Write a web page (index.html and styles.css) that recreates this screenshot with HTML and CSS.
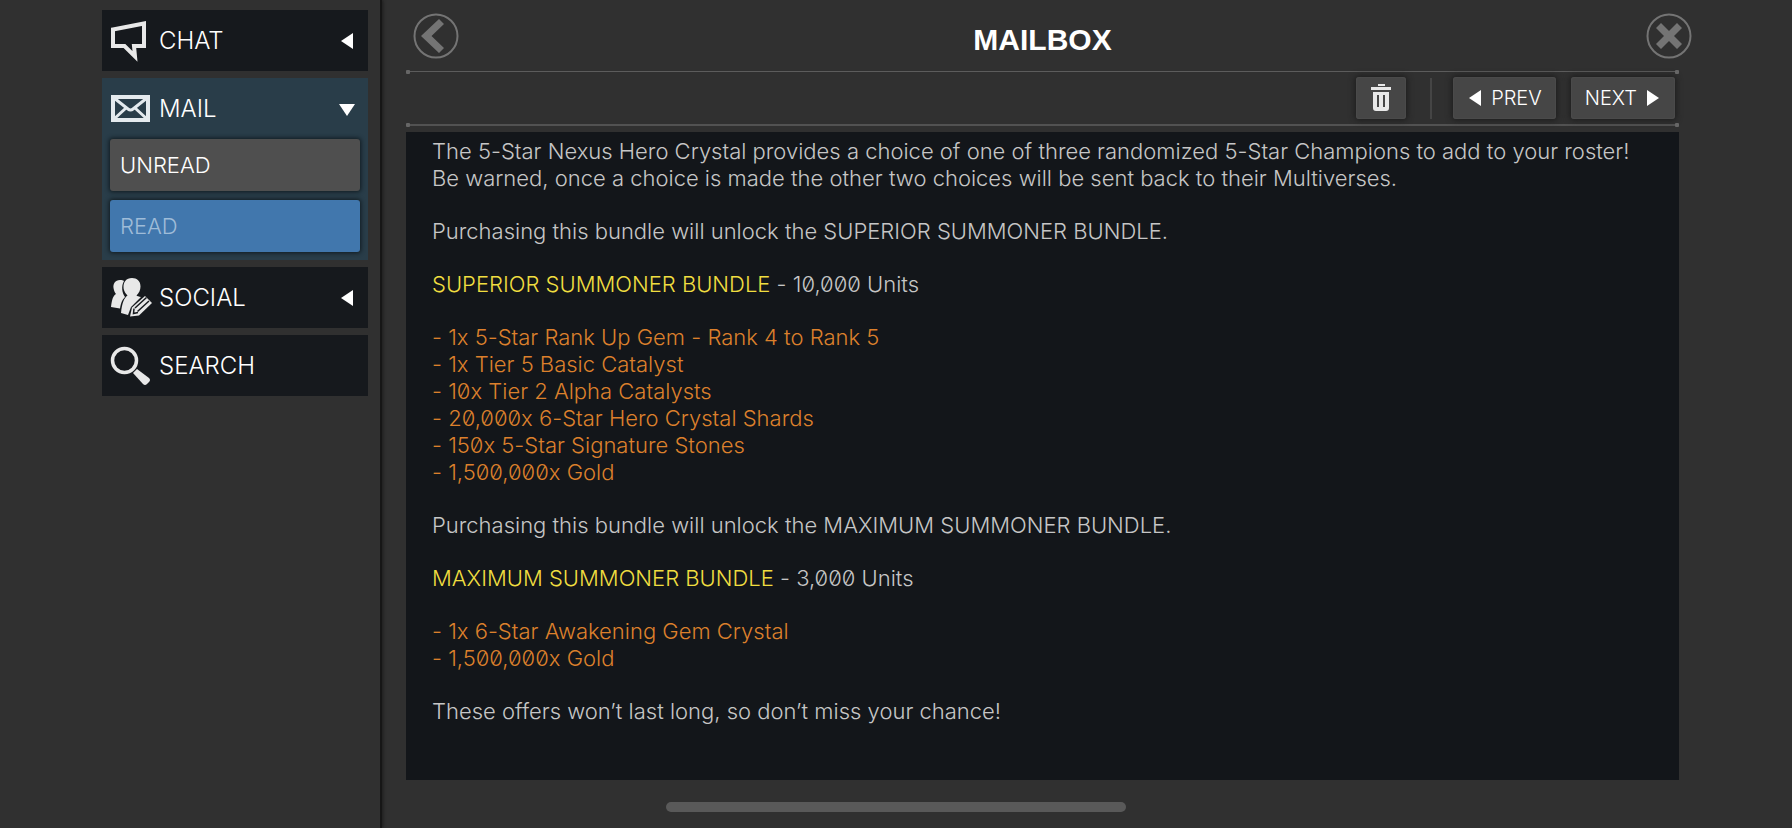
FILE: index.html
```html
<!DOCTYPE html>
<html lang="en">
<head>
<meta charset="UTF-8">
<meta name="viewport" content="width=device-width, initial-scale=1.0">
<title>Mailbox</title>
<link rel="stylesheet" href="styles.css">
</head>
<body>
    <div class="layout">
        <nav class="sidebar">
            <button class="menu-item">
                <svg class="menu-icon" viewBox="0 0 40 40"><path d="M2 8.500L33 2.500V25H23L24 35.500L13.500 25H2Z" fill="none" stroke="#e8e8e8" stroke-width="4"/></svg>
                <span class="menu-label">CHAT</span>
                <svg class="arrow" viewBox="0 0 16 16"><path d="M2 8L14 0V16Z"/></svg>
            </button>

            <div class="menu-group">
                <button class="menu-item active" aria-expanded="true">
                    <svg class="menu-icon" viewBox="0 0 40 40"><path d="M2 8H37V31H2Z" fill="none" stroke="#e4eaee" stroke-width="4"/><path d="M3 9L17 20Q19.500 22 22 20L36 9M3 30L15 19M36 30L24 19" fill="none" stroke="#e4eaee" stroke-width="3"/></svg>
                    <span class="menu-label">MAIL</span>
                    <svg class="arrow" viewBox="0 0 16 16"><path d="M0 3H16L8 15Z"/></svg>
                </button>
                <div class="submenu">
                    <button class="sub-item">UNREAD</button>
                    <button class="sub-item selected">READ</button>
                </div>
            </div>

            <button class="menu-item">
                <svg class="menu-icon" viewBox="0 0 40 40">
                    <path d="M9 2C4 2 2 6 2.500 10C3 13 4 15 5 16C2 18 1 21 0 29L9 30.500C10 25 11 22 14 19C11 15 10 8 13 3C12 2 11 2 9 2Z" fill="#e8e8e8"/>
                    <path d="M21 0C15 0 12.500 4 12.500 9C12.500 13 15 16 16.500 17.500C13 20 11 25 10 35L17 37L20 29L30 19C28 18.500 26 18 25.500 17.500C28 15 29.500 12 29.500 8.500C29.500 3 26 0 21 0Z" fill="#e8e8e8"/>
                    <path d="M19 38.500L21 29.500L34 18L41 25L28 37.500Z" fill="#e8e8e8"/>
                    <path d="M24 30L35.500 19.500M26.500 33.500L38 23M23 30.500L22.500 35.500L27 34.500" fill="none" stroke="#16191d" stroke-width="1.500"/>
                </svg>
                <span class="menu-label">SOCIAL</span>
                <svg class="arrow" viewBox="0 0 16 16"><path d="M2 8L14 0V16Z"/></svg>
            </button>

            <button class="menu-item">
                <svg class="menu-icon" viewBox="0 0 40 40"><circle cx="13.500" cy="14.500" r="12" fill="none" stroke="#e8e8e8" stroke-width="3.500"/><path d="M22 27L26 23L38 32Q40 34 38 36L36 38Q34 40 32 38Z" fill="#e8e8e8"/></svg>
                <span class="menu-label">SEARCH</span>
            </button>
        </nav>

        <main class="mailbox">
            <header class="header">
                <button class="round-btn back" aria-label="Back">
                    <svg viewBox="0 0 46 46"><circle cx="23" cy="23" r="21.500"/><path d="M8 23L26 6L31 11L18.500 23L31 35L26 40Z"/></svg>
                </button>
                <h1>MAILBOX</h1>
                <button class="round-btn close" aria-label="Close">
                    <svg viewBox="0 0 46 46"><circle cx="23" cy="23" r="21.500"/><path d="M10 15L15 10L23 18L31 10L36 15L28 23L36 31L31 36L23 28L15 36L10 31L18 23Z"/></svg>
                </button>
            </header>

            <div class="toolbar">
                <button class="tool-btn trash" aria-label="Delete">
                    <svg viewBox="0 0 20 28"><path d="M7 0H14V2H7ZM0 3H20V6H0ZM2 8H18V24Q18 27 15 27H5Q2 27 2 24ZM6 11V23H8V11ZM12 11V23H14V11Z" fill-rule="evenodd"/></svg>
                </button>
                <span class="separator"></span>
                <button class="tool-btn">
                    <svg class="arrow" viewBox="0 0 16 16"><path d="M2 8L14 0V16Z"/></svg>
                    PREV
                </button>
                <button class="tool-btn">
                    NEXT
                    <svg class="arrow" viewBox="0 0 16 16"><path d="M14 8L2 0V16Z"/></svg>
                </button>
            </div>

            <article class="message">
                <p>The 5-Star Nexus Hero Crystal provides a choice of one of three randomized 5-Star Champions to add to your roster!<br>Be warned, once a choice is made the other two choices will be sent back to their Multiverses.</p>
                <p>Purchasing this bundle will unlock the SUPERIOR SUMMONER BUNDLE.</p>
                <p><span class="bundle">SUPERIOR SUMMONER BUNDLE</span> - 10,000 Units</p>
                <ul>
                    <li>- 1x 5-Star Rank Up Gem - Rank 4 to Rank 5</li>
                    <li>- 1x Tier 5 Basic Catalyst</li>
                    <li>- 10x Tier 2 Alpha Catalysts</li>
                    <li>- 20,000x 6-Star Hero Crystal Shards</li>
                    <li>- 150x 5-Star Signature Stones</li>
                    <li>- 1,500,000x Gold</li>
                </ul>
                <p>Purchasing this bundle will unlock the MAXIMUM SUMMONER BUNDLE.</p>
                <p><span class="bundle">MAXIMUM SUMMONER BUNDLE</span> - 3,000 Units</p>
                <ul>
                    <li>- 1x 6-Star Awakening Gem Crystal</li>
                    <li>- 1,500,000x Gold</li>
                </ul>
                <p>These offers won’t last long, so don’t miss your chance!</p>
            </article>
        </main>
    </div>
    <div class="home-bar"></div>
</body>
</html>
```

FILE: styles.css
```css
* {
    box-sizing: border-box;
}
body {
    margin: 0;
    background: #303030;
    color: #fff;
    font-family: Inter, "Liberation Sans", sans-serif;
    font-weight: 300;
}
button {
    font: inherit;
    color: inherit;
    border: none;
    padding: 0;
    background: none;
    cursor: pointer;
}
svg {
    display: block;
    overflow: visible;
}
.layout {
    display: grid;
    grid-template-columns: 382px 1fr;
    min-height: 100vh;
}

/* sidebar */
.sidebar {
    display: flex;
    flex-direction: column;
    gap: 7px;
    padding: 10px 12px 10px 102px;
    border-right: 2px solid #161616;
    box-shadow: 1px 0 3px #1c1c1c;
}
.menu-item {
    display: flex;
    align-items: center;
    gap: 8px;
    width: 100%;
    height: 61px;
    padding: 0 13px 0 9px;
    background: #16191d;
    font-size: 24px;
    text-align: left;
}
.menu-item.active {
    background: none;
}
.menu-group {
    background: #293d49;
}
.menu-icon {
    width: 40px;
    height: 40px;
    flex: none;
}
.menu-label {
    flex: 1;
}
.arrow {
    width: 16px;
    height: 16px;
    flex: none;
    fill: #fff;
}
.submenu {
    display: flex;
    flex-direction: column;
    gap: 9px;
    padding: 0 8px 8px;
}
.sub-item {
    height: 52px;
    padding: 0 10px;
    border-radius: 3px;
    background: #4f4f4f;
    box-shadow: 0 0 4px 1px #101a20;
    font-size: 22px;
    text-align: left;
}
.sub-item.selected {
    background: #4177ad;
    color: #9fbcd8;
}

/* mailbox */
.mailbox {
    display: flex;
    flex-direction: column;
    padding: 0 113px 48px 24px;
}
.header {
    display: grid;
    grid-template-columns: 1fr auto 1fr;
    align-items: center;
    height: 71px;
}
h1 {
    margin: 0;
    padding-top: 8px;
    font-family: "Liberation Sans", Arial, sans-serif;
    font-size: 30px;
    font-weight: bold;
}
.round-btn {
    width: 46px;
    height: 46px;
}
.round-btn circle {
    fill: none;
    stroke: #747474;
    stroke-width: 2;
}
.round-btn path {
    fill: #747474;
}
.back {
    margin-left: 7px;
}
.close {
    justify-self: end;
    margin-right: -13px;
}
.toolbar {
    position: relative;
    display: flex;
    justify-content: flex-end;
    align-items: center;
    gap: 15px;
    height: 55px;
    padding-right: 4px;
    border-top: 1px solid #5c5c5c;
    border-bottom: 2px solid #525252;
}
/* end dots of the two rules */
.toolbar::before,
.toolbar::after {
    content: "";
    position: absolute;
    top: -2px;
    width: 4px;
    height: 4px;
    border-radius: 1px;
    background: #666;
    box-shadow: 0 53px #666;
}
.toolbar::before {
    left: 0;
}
.toolbar::after {
    right: 0;
}
.tool-btn {
    display: flex;
    align-items: center;
    gap: 8px;
    height: 42px;
    padding: 0 14px;
    border-radius: 3px;
    background: #464646;
    box-shadow: 0 0 6px 1px #1c1c1c, inset 0 0 2px #5a5a5a;
    font-size: 20px;
}
.trash {
    padding: 0 15px;
}
.trash svg {
    width: 20px;
    height: 28px;
    fill: #e8e8e8;
}
.separator {
    width: 2px;
    height: 41px;
    margin: 0 6px 0 9px;
    background: #454545;
}
.message {
    flex: 1;
    margin-top: 6px;
    padding: 6px 26px;
    background: #13161a;
    color: #c6c6c6;
    font-size: 22px;
    line-height: 27px;
    font-variant-numeric: slashed-zero;
    font-variant-ligatures: no-contextual;
}
.message p,
.message ul {
    margin: 0 0 26px;
    padding: 0;
    list-style: none;
}
.message ul {
    color: #dc802c;
}
.bundle {
    color: #f0de40;
}

.home-bar {
    position: fixed;
    left: 50%;
    bottom: 16px;
    width: 460px;
    height: 10px;
    margin-left: -230px;
    border-radius: 5px;
    background: #595959;
}
```
